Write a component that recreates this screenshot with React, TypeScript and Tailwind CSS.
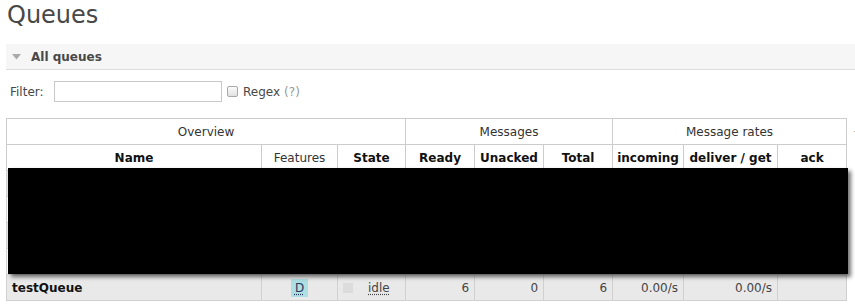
import React from "react";

const cols = [255, 76, 68, 69, 69, 69, 71, 94, 69];

const Cells: React.FC = () => (
  <>
    {cols.map((_, i) => (
      <td key={i} className="border border-[#d4d4d4] h-[26px] p-0" />
    ))}
  </>
);

const App: React.FC = () => {
  return (
    <div className="w-[855px] h-[306px] overflow-hidden bg-white font-['DejaVu_Sans',Verdana,sans-serif] text-[12px] text-[#484848]">
      {/* TITLE */}
      <h1 className="pl-[7px] text-[24px] leading-[30px] font-normal text-[#484848]">
        Queues
      </h1>

      {/* SECTION HEADER */}
      <div className="mt-[14px] ml-[6px] h-[26px] flex items-center bg-[#f6f6f6] border-b border-[#dcdcdc]">
        <svg width="9" height="6" viewBox="0 0 9 6" className="ml-[6px]">
          <polygon points="0,0 9,0 4.5,5.5" fill="#aaaaaa" />
        </svg>
        <span className="ml-[10px] font-bold text-[#484848]">All queues</span>
      </div>

      {/* FILTER */}
      <div className="mt-[11px] h-[21px] flex items-center">
        <span className="w-[54px] pl-[10px] text-[#484848]">Filter:</span>
        <input className="w-[168px] h-[21px] border border-[#c8c8c8] bg-white outline-none" />
        <span className="ml-[5px] w-[11px] h-[11px] rounded-[2px] border border-[#a8a8a8] bg-gradient-to-b from-[#fbfbfb] to-[#e2e2e2]" />
        <span className="ml-[5px] text-[#484848]">Regex</span>
        <span className="ml-[4px] text-[#999]">(?)</span>
      </div>

      {/* TABLE */}
      <div className="mt-[16px] ml-[6px] flex items-start">
        <div className="relative">
          <table className="border-collapse table-fixed w-[841px]">
            <colgroup>
              {cols.map((w, i) => (
                <col key={i} style={{ width: w }} />
              ))}
            </colgroup>
            <thead>
              <tr className="bg-white text-[#333]">
                <th colSpan={3} className="border border-[#ccc] h-[26px] p-0 font-normal">
                  Overview
                </th>
                <th colSpan={3} className="border border-[#ccc] h-[26px] p-0 font-normal">
                  Messages
                </th>
                <th colSpan={3} className="border border-[#ccc] h-[26px] p-0 font-normal">
                  Message rates
                </th>
              </tr>
              <tr className="bg-white text-[#111]">
                <th className="border border-[#ccc] h-[26px] p-0 font-bold">Name</th>
                <th className="border border-[#ccc] h-[26px] p-0 font-normal text-[#333]">Features</th>
                <th className="border border-[#ccc] h-[26px] p-0 font-bold">State</th>
                <th className="border border-[#ccc] h-[26px] p-0 font-bold">Ready</th>
                <th className="border border-[#ccc] h-[26px] p-0 font-bold">Unacked</th>
                <th className="border border-[#ccc] h-[26px] p-0 font-bold">Total</th>
                <th className="border border-[#ccc] h-[26px] p-0 font-bold">incoming</th>
                <th className="border border-[#ccc] h-[26px] p-0 font-bold">deliver / get</th>
                <th className="border border-[#ccc] h-[26px] p-0 font-bold">ack</th>
              </tr>
            </thead>
            <tbody>
              <tr className="bg-[#e9e9e9]"><Cells /></tr>
              <tr className="bg-white"><Cells /></tr>
              <tr className="bg-[#e9e9e9]"><Cells /></tr>
              <tr className="bg-white"><Cells /></tr>
              <tr className="bg-[#e9e9e9] text-[#444]">
                <td className="border border-[#d0d0d0] h-[26px] py-0 pl-[5px] font-bold text-[#111]">
                  testQueue
                </td>
                <td className="border border-[#d0d0d0] h-[26px] p-0">
                  <div className="flex justify-center">
                    <span className="w-[17px] h-[18px] flex items-center justify-center bg-[#ade0e3] text-[#2c3560] underline decoration-dotted underline-offset-2">
                      D
                    </span>
                  </div>
                </td>
                <td className="border border-[#d0d0d0] h-[26px] py-0 pl-[5px]">
                  <div className="flex items-center">
                    <span className="w-[10px] h-[10px] bg-[#dcdcdc]" />
                    <span className="ml-[15px] text-[#444] underline decoration-dotted underline-offset-2">
                      idle
                    </span>
                  </div>
                </td>
                <td className="border border-[#d0d0d0] h-[26px] py-0 pr-[5px] text-right">6</td>
                <td className="border border-[#d0d0d0] h-[26px] py-0 pr-[5px] text-right">0</td>
                <td className="border border-[#d0d0d0] h-[26px] py-0 pr-[5px] text-right">6</td>
                <td className="border border-[#d0d0d0] h-[26px] py-0 pr-[5px] text-right">0.00/s</td>
                <td className="border border-[#d0d0d0] h-[26px] py-0 pr-[5px] text-right">0.00/s</td>
                <td className="border border-[#d0d0d0] h-[26px] p-0" />
              </tr>
            </tbody>
          </table>

          {/* REDACTION OVERLAY */}
          <div className="absolute left-[2px] top-[50px] w-[840px] h-[106px] bg-black shadow-[3px_3px_4px_rgba(0,0,0,0.55)]" />
        </div>
        <span className="ml-[6px] mt-[6px] text-[11px] text-[#999]">+/-</span>
      </div>
    </div>
  );
};

export default App;
